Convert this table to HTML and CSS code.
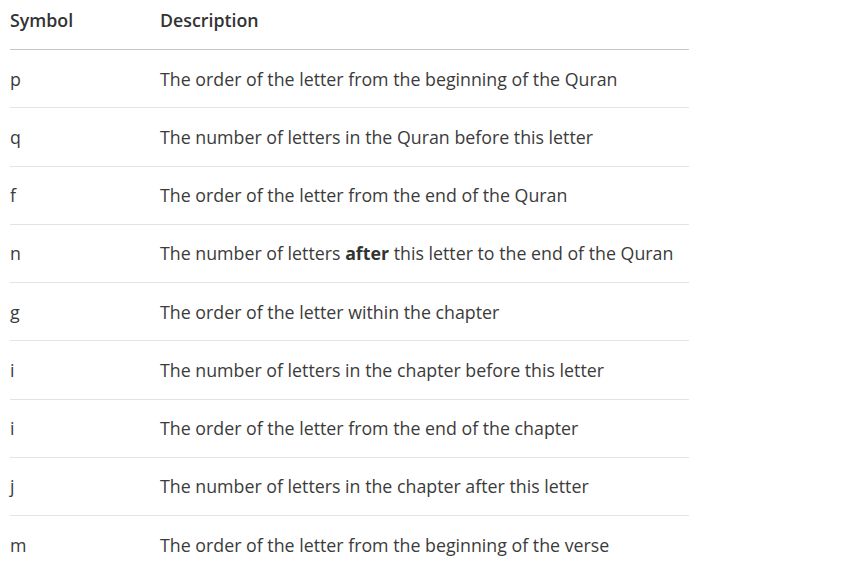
FILE: index.html
```html
<!DOCTYPE html>
<html>
<head>
<meta charset="utf-8">
<link rel="stylesheet" href="styles.css">
</head>
<body>
<table class="symbols">
  <thead>
    <tr><th class="sym">Symbol</th><th>Description</th></tr>
  </thead>
  <tbody>
    <tr><td class="sym">p</td><td>The order of the letter from the beginning of the Quran</td></tr>
    <tr><td class="sym">q</td><td>The number of letters in the Quran before this letter</td></tr>
    <tr><td class="sym">f</td><td>The order of the letter from the end of the Quran</td></tr>
    <tr><td class="sym">n</td><td>The number of letters <strong>after</strong> this letter to the end of the Quran</td></tr>
    <tr><td class="sym">g</td><td>The order of the letter within the chapter</td></tr>
    <tr><td class="sym">i</td><td>The number of letters in the chapter before this letter</td></tr>
    <tr><td class="sym">i</td><td>The order of the letter from the end of the chapter</td></tr>
    <tr><td class="sym">j</td><td>The number of letters in the chapter after this letter</td></tr>
    <tr><td class="sym">m</td><td>The order of the letter from the beginning of the verse</td></tr>
  </tbody>
</table>
</body>
</html>
```

FILE: styles.css
```css
body {
  margin: 0;
  background: #ffffff;
  font-family: "Open Sans", "Noto Sans", sans-serif;
  color: #3b3b3b;
}
.symbols {
  margin-left: 10px;
  width: 679px;
  border-collapse: collapse;
  font-size: 17.8px;
}
.symbols th {
  text-align: left;
  font-weight: 600;
  color: #333333;
  height: 40px;
  padding: 0 0 9px 0;
  border-bottom: 1px solid #c6c6c6;
  vertical-align: middle;
}
.symbols td {
  height: 57.25px;
  padding: 0;
  border-bottom: 1px solid #e3e3e3;
  vertical-align: middle;
}
.symbols tbody tr:last-child td {
  border-bottom: none;
}
.symbols .sym {
  width: 150px;
}
.symbols strong {
  font-weight: 700;
  color: #333333;
}
```
